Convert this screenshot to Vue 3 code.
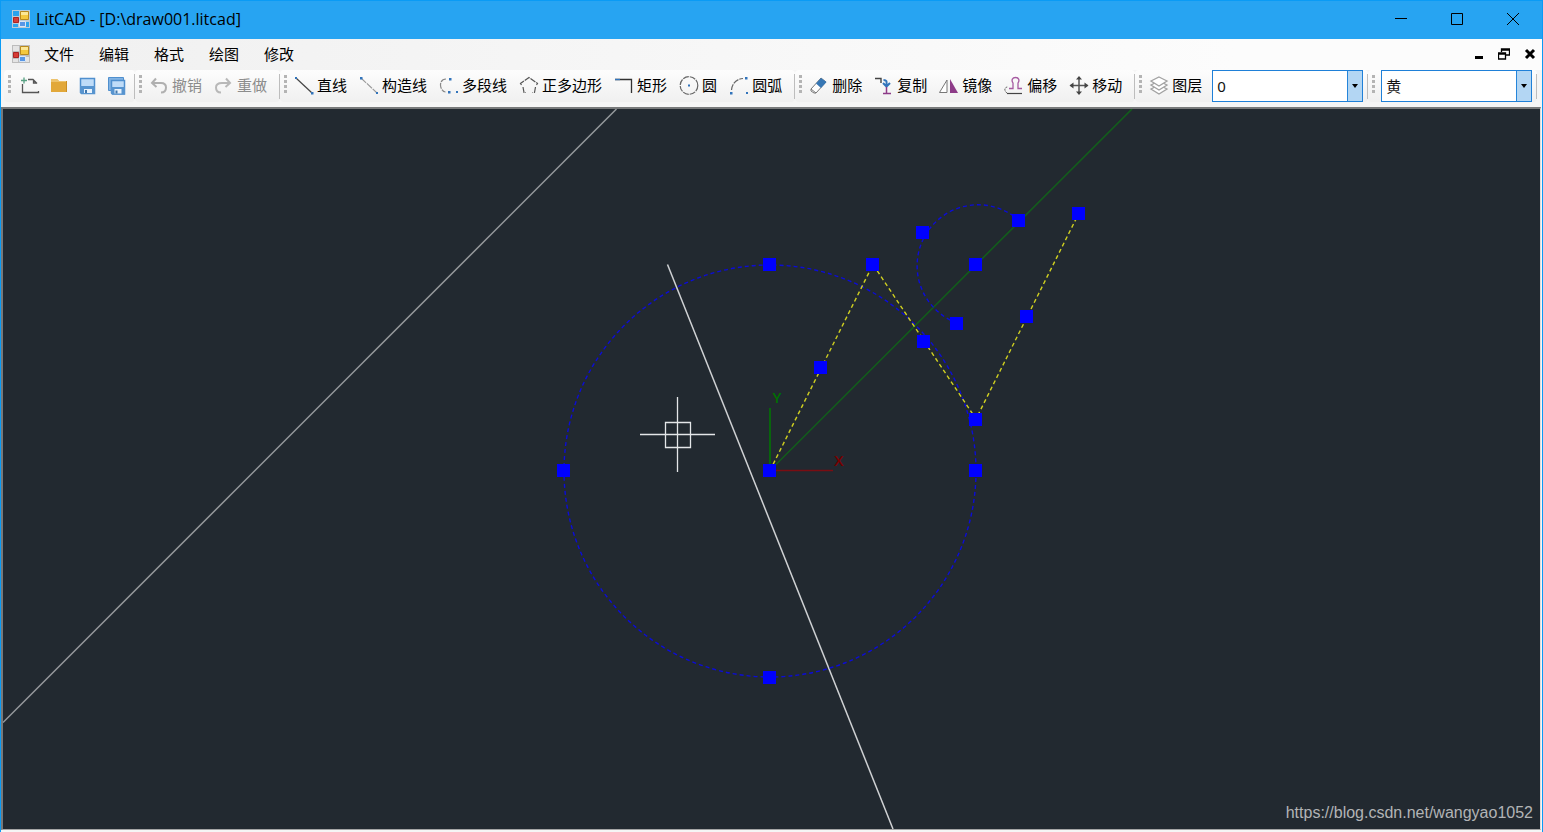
<script setup>
import { ref } from 'vue'

const menus = ['文件', '编辑', '格式', '绘图', '修改']
const fileTools = [
  { icon: 'new', label: '新建' },
  { icon: 'open', label: '打开' },
  { icon: 'save', label: '保存' },
  { icon: 'saveall', label: '另存为' }
]
const groups = [
  {
    disabled: true,
    tools: [
      { icon: 'undo', label: '撤销' },
      { icon: 'redo', label: '重做' }
    ]
  },
  {
    tools: [
      { icon: 'line', label: '直线' },
      { icon: 'xline', label: '构造线' },
      { icon: 'polyline', label: '多段线' },
      { icon: 'polygon', label: '正多边形' },
      { icon: 'rect', label: '矩形' },
      { icon: 'circle', label: '圆' },
      { icon: 'arc', label: '圆弧' }
    ]
  },
  {
    tools: [
      { icon: 'erase', label: '删除' },
      { icon: 'copy', label: '复制' },
      { icon: 'mirror', label: '镜像' },
      { icon: 'offset', label: '偏移' },
      { icon: 'move', label: '移动' }
    ]
  }
]

// Icon artwork on a 20 x 20 grid
const icons = {
  new: '<path d="M2.500 9V17.500H18.500V16" fill="none" stroke="#555" stroke-width="1.300"/><path d="M8 4.500h5l4 4M13.500 4.500v3.500h3" fill="none" stroke="#555" stroke-width="1.300"/><path d="M1 5.500h6M4 2.500v6" stroke="#58a183" stroke-width="1.300"/>',
  open: '<path d="M2 4h6l2 2h8v11H2z" fill="#e2a83a"/><path d="M2 4h6l2 2h7v1H2z" fill="#edc36d"/><path d="M17.500 6v11" stroke="#c98f25"/>',
  save: '<path d="M2.500 3.500h14v15h-13l-1-1z" fill="#bfdcf8" stroke="#4f8fce" stroke-width="1.500"/><path d="M2 11h15v8H3.500L2 17.500z" fill="#5794cf"/><path d="M6 14h8v4H6z" fill="#e9f3fd"/><path d="M7 15h2v3H7z" fill="#4178ae"/>',
  saveall: '<path d="M1.500 2.500h15v13h-15z" fill="#82b3e3" stroke="#4f8fce"/><path d="M4.500 5.500h13v13.500h-12l-1-1z" fill="#bfdcf8" stroke="#4f8fce" stroke-width="1.500"/><path d="M4 12h14v7.500H5L4 18z" fill="#5794cf"/><path d="M7.500 14h7v4.500h-7z" fill="#e9f3fd"/><path d="M8.500 15.500h2v3h-2z" fill="#4178ae"/>',
  undo: '<path d="M7 3.500L3 8l4.500 4M3.500 8H12c4 0 5 2 5 4.500 0 3-2 5-5 5" fill="none" stroke="#b0b0b0" stroke-width="2"/>',
  redo: '<path d="M12 3.500L16 8l-4.500 4M15.500 8H8c-4 0-6 2-6 4.500 0 3 2 5 5 5" fill="none" stroke="#b8b8b8" stroke-width="2"/>',
  line: '<path d="M2 3L18 18" stroke="#444" stroke-width="1.200"/><path d="M1 2h2v2H1zM17 17h2.500v2.500H17z" fill="#3274bb"/>',
  xline: '<path d="M2 3L18 18" stroke="#999" stroke-width="1.100" stroke-dasharray="7 1"/><path d="M1 2h2.500v2.500H1zM17 17h2v2H17z" fill="#3274bb"/>',
  polyline: '<path d="M7 4C3 4 1.500 7 1.500 10s2 7 5 7" fill="none" stroke="#888" stroke-width="1.200" stroke-dasharray="6 1"/><path d="M10 3h2.500v2.500H10zM9 16h2.500v2.500H9zM17 16h2v2H17z" fill="#3274bb"/>',
  polygon: '<path d="M4 12L5 17.500h2M2.500 10L1.500 8.500 10 2.500 18.500 8.500 17.500 10M16.500 12L15.500 17.500h-2" fill="none" stroke="#555" stroke-width="1.200" stroke-dasharray="6 1"/>',
  rect: '<path d="M1 4.500H17.500V18" fill="none" stroke="#333" stroke-width="1.300"/><path d="M1 4.500h5" stroke="#3274bb" stroke-width="1.300"/>',
  circle: '<circle cx="10" cy="10.500" r="8.800" fill="none" stroke="#666" stroke-width="1.200" stroke-dasharray="6 1"/><path d="M9 9.500h2v2H9z" fill="#3274bb"/>',
  arc: '<path d="M2.500 15C3 9 7 4 14 3.500" fill="none" stroke="#666" stroke-width="1.200" stroke-dasharray="6 1"/><path d="M1 17h2.500v2.500H1zM16 2h2.500v2.500H16zM17 17h2v2h-2z" fill="#3274bb"/>',
  erase: '<path d="M2 14L12 3l5 4L7 18H5l-3-2z" fill="#fff" stroke="#777"/><path d="M7 8.500L12 3l5.500 4L12 13z" fill="#3777b4"/><path d="M2 14l5 4" stroke="#777"/>',
  copy: '<path d="M1 3.500h6V8" fill="none" stroke="#444" stroke-width="1.400"/><path d="M9.500 5c4 0 3 2 3 6M9 8l3.500 3.500L16 8" fill="none" stroke="#3274bb" stroke-width="2"/><path d="M12.500 12v6M9 18.500h8" stroke="#8d3b88" stroke-width="1.500"/>',
  mirror: '<path d="M0.500 17.500L8 5v12.500z" fill="#fff" stroke="#777"/><path d="M11 4v14h8z" fill="#8d3b88"/>',
  offset: '<path d="M5 13.500h4V8C7 5 8.500 2.500 11.500 2.500S16 5 14 8v5.500h4" fill="none" stroke="#a65aa1" stroke-width="1.300"/><path d="M3 18.500h15" stroke="#444" stroke-width="1.200"/><path d="M3 18C0 16 0 12 4 12" fill="none" stroke="#555" stroke-dasharray="2 1"/>',
  move: '<path d="M10 2v17M1.500 10.500h17" stroke="#555" stroke-width="1.500"/><path d="M10 1l3 3.500H7zM10 20l3-3.500H7zM0.500 10.500l4-3v6zM19.500 10.500l-4-3v6z" fill="#444"/>',
  layers: '<g fill="#fff" stroke="#a2a2a2" stroke-width="1.300"><path d="M10 10l8 4-8 5-8-5z"/><path d="M10 6l8 4-8 5-8-5z"/><path d="M10 2l8 4-8 5-8-5z"/></g>'
}

// Drawing coordinates share the view box of the canvas
const grips = [
  [770, 264], [564, 470], [976, 470], [770, 677], [770, 470],
  [821, 367], [873, 264], [924, 341], [976, 419], [1027, 316], [1079, 213],
  [976, 264], [1019, 220], [923, 232], [957, 323]
]

const layer = ref('0')
const color = ref('黄')
</script>

<template>
  <div class="window">
    <header class="titlebar">
      <svg class="logo" viewBox="0 0 18 18" aria-hidden="true">
        <path d="M0 0h18v18H0z" fill="#b9cbd8" />
        <path d="M1 1h6v5H1zM1 14h5v3H1zM14 12h3v5h-3z" fill="#2aa3ee" />
        <path d="M8.500 1.500h8v8h-8z" fill="#f3c83e" stroke="#b98a1d" />
        <path d="M9 2h7v3H9z" fill="#fbe795" />
        <path d="M1.500 7.500h5v5h-5z" fill="#d63c35" stroke="#a92323" />
        <path d="M7.500 11.500h6v5h-6z" fill="#5897e6" stroke="#d9e7f6" />
      </svg>
      <h1>LitCAD - [D:\draw001.litcad]</h1>
      <div class="caption">
        <button aria-label="最小化"><svg viewBox="0 0 12 12"><path d="M0 5.500h12" /></svg></button>
        <button aria-label="最大化"><svg viewBox="0 0 12 12"><path d="M.5.5h11v11H.5z" /></svg></button>
        <button aria-label="关闭"><svg viewBox="0 0 12 12"><path d="M0 0l12 12M12 0L0 12" /></svg></button>
      </div>
    </header>

    <nav class="menubar">
      <svg class="logo" viewBox="0 0 18 18" aria-hidden="true">
        <path d="M0 0h18v18H0z" fill="#bcbcbc" />
        <path d="M1 1h6v5H1zM1 14h5v3H1zM14 12h3v5h-3z" fill="#e4e4e4" />
        <path d="M8.500 1.500h8v8h-8z" fill="#f3c83e" stroke="#b98a1d" />
        <path d="M9 2h7v3H9z" fill="#fbe795" />
        <path d="M1.500 7.500h5v5h-5z" fill="#d63c35" stroke="#a92323" />
        <path d="M7.500 11.500h6v5h-6z" fill="#5897e6" stroke="#d9e7f6" />
      </svg>
      <button v-for="m in menus" :key="m" class="menu">{{ m }}</button>
      <div class="child">
        <button aria-label="最小化子窗口"><svg viewBox="0 0 12 12"><path d="M3 9.500h8" stroke="#000" stroke-width="3" /></svg></button>
        <button aria-label="还原子窗口"><svg viewBox="0 0 12 12"><path d="M3.500 4V1h8v6H8M3.500 2h8M.5 5h7v6h-7zM.5 6h7" fill="none" stroke="#000" stroke-width="1.300" /></svg></button>
        <button aria-label="关闭子窗口"><svg viewBox="0 0 12 12"><path d="M2 2l8 8M10 2l-8 8" stroke="#000" stroke-width="3" /></svg></button>
      </div>
    </nav>

    <div class="toolbar">
      <div class="strip files">
        <span class="grip"></span>
        <button v-for="t in fileTools" :key="t.icon" class="tool" :aria-label="t.label">
          <svg viewBox="0 0 20 20" v-html="icons[t.icon]"></svg>
        </button>
      </div>
      <div v-for="(g, i) in groups" :key="i" class="strip">
        <span class="grip"></span>
        <button v-for="t in g.tools" :key="t.icon" class="tool" :disabled="g.disabled">
          <svg viewBox="0 0 20 20" v-html="icons[t.icon]"></svg>{{ t.label }}
        </button>
      </div>
      <div class="strip combo-strip">
        <span class="grip"></span>
        <label class="tool" for="layer">
          <svg viewBox="0 0 20 20" v-html="icons.layers"></svg>图层
        </label>
        <div class="combo">
          <select id="layer" v-model="layer"><option>0</option></select>
          <span class="drop"></span>
        </div>
      </div>
      <div class="strip combo-strip color-strip">
        <span class="grip"></span>
        <div class="combo">
          <select v-model="color" aria-label="颜色"><option>黄</option></select>
          <span class="drop"></span>
        </div>
      </div>
    </div>

    <main class="canvas">
      <svg class="drawing" viewBox="3 109 1537 720" preserveAspectRatio="xMidYMid slice">
        <g fill="none">
          <path d="M3 722.500L616.500 109" stroke="#96999c" stroke-width="1.500" />
          <path d="M667.500 264.500L893 829" stroke="#d0d2d4" stroke-width="1.500" />
          <path d="M770 470.500L1132 109" stroke="#125c1b" stroke-width="1.600" />
          <path d="M770 408V470" stroke="#007800" stroke-width="1.500" />
          <path d="M770 470.500H833" stroke="#7a0d12" stroke-width="1.500" />
          <g stroke="#0c0cd6" stroke-width="1.400" stroke-dasharray="4 3">
            <circle cx="770" cy="471" r="206" />
            <path d="M1019 220.500A61 61 0 1 0 957 323" />
          </g>
          <path d="M770 470.500L873 264.500 976 419 1079 213" stroke="#d0d020" stroke-width="1.400" stroke-dasharray="4 3" />
          <g stroke="#e4e6e8" stroke-width="1.300">
            <path d="M640 434.500H715M677.500 397V472" />
            <path d="M665.500 422.500h25v25h-25z" />
          </g>
        </g>
        <rect v-for="(p, i) in grips" :key="i" :x="p[0] - 7" :y="p[1] - 6" width="13" height="13" fill="#0000ff" />
        <text x="777" y="403" fill="#007000">Y</text>
        <text x="839" y="466" fill="#780000">X</text>
      </svg>
      <span class="watermark">https://blog.csdn.net/wangyao1052</span>
    </main>
  </div>
</template>

<style>
body {
  background: #f0f0f0;
}
</style>

<style scoped>
.window {
  box-sizing: border-box;
  display: flex;
  flex-direction: column;
  height: 100vh;
  border: 1px solid #0a9bf5;
  border-bottom: 0;
  background: #f5f5f5;
  font-family: "Noto Sans", "Noto Sans CJK SC", sans-serif;
  font-size: 15px;
  color: #000;
  overflow: hidden;
}
button {
  padding: 0;
  border: 0;
  background: none;
  font: inherit;
  color: inherit;
}
.titlebar {
  display: flex;
  align-items: center;
  box-sizing: border-box;
  flex: none;
  height: 38px;
  padding-left: 11px;
  padding-bottom: 2px;
  background: #27a4f2;
}
.logo {
  width: 18px;
  height: 18px;
}
h1 {
  margin: 0 0 0 6px;
  font-family: "Open Sans", sans-serif;
  font-size: 16px;
  line-height: 22px;
  font-weight: 400;
}
.caption {
  display: flex;
  margin-left: auto;
  padding-right: 1px;
}
.caption button {
  display: flex;
  align-items: center;
  justify-content: center;
  width: 56px;
  height: 36px;
}
.caption svg {
  width: 12px;
  height: 12px;
  fill: none;
  stroke: #000;
}
.menubar {
  display: flex;
  align-items: center;
  box-sizing: border-box;
  flex: none;
  height: 31px;
  padding-left: 11px;
  padding-bottom: 2px;
  background: linear-gradient(90deg, #f0f0f0, #fcfcfc 80%);
}
.menu {
  margin-left: 14px;
  margin-right: 11px;
  line-height: 22px;
}
.child {
  display: flex;
  gap: 14px;
  margin-left: auto;
  padding-right: 6px;
}
.child svg {
  display: block;
  width: 12px;
  height: 12px;
}
.toolbar {
  display: flex;
  flex: none;
  height: 37px;
  padding-left: 3px;
  background: #f5f5f5;
  white-space: nowrap;
}
.strip {
  position: relative;
  display: flex;
  align-items: center;
  gap: 12px;
  box-sizing: border-box;
  height: 32px;
  padding: 0 13px 0 14px;
  border-radius: 4px;
  background: linear-gradient(#fdfdfd, #f0f0f0);
}
.strip::after {
  content: "";
  position: absolute;
  right: 0;
  top: 4px;
  bottom: 3px;
  width: 1px;
  background: #bdbdbd;
}
.files {
  gap: 9px;
  padding-left: 16px;
  padding-right: 8px;
}
.combo-strip {
  gap: 10px;
  padding-right: 5px;
}
.color-strip {
  padding-left: 13px;
}
.grip {
  position: absolute;
  left: 4px;
  top: 5px;
  width: 3px;
  height: 18px;
  background: repeating-linear-gradient(#b4b4b4 0 3px, transparent 3px 5px);
}
.tool {
  display: flex;
  align-items: center;
  gap: 3px;
  padding-bottom: 2px;
  line-height: 22px;
}
.tool:disabled {
  color: #8c8c8c;
}
.tool svg {
  width: 20px;
  height: 20px;
}
.combo {
  position: relative;
  width: 151px;
  height: 32px;
}
select {
  appearance: none;
  box-sizing: border-box;
  width: 100%;
  height: 100%;
  padding: 0 20px 0 4px;
  border: 1px solid #1f80d8;
  border-radius: 0;
  background: #fff;
  font: inherit;
  color: #111;
}
.drop {
  position: absolute;
  top: 1px;
  right: 1px;
  bottom: 1px;
  width: 14px;
  border-left: 1px solid #2585da;
  background: #b3d6f3;
  pointer-events: none;
}
.drop::after {
  content: "";
  position: absolute;
  top: 13px;
  left: 4px;
  border: 3px solid transparent;
  border-top: 4px solid #000;
  border-bottom: 0;
}
.canvas {
  position: relative;
  flex: 1;
  min-height: 0;
  margin-right: 1px;
  margin-bottom: 2px;
  border: 2px solid #77797a;
  border-right: 1px solid #dcdcdc;
  border-bottom: 1px solid #a5a5a5;
  background: #222930;
}
.drawing {
  position: absolute;
  inset: 0;
  width: 100%;
  height: 100%;
}
.drawing text {
  font-family: "Open Sans", sans-serif;
  font-size: 15px;
  font-weight: 600;
  text-anchor: middle;
}
.watermark {
  position: absolute;
  right: 7px;
  bottom: 6px;
  font-family: "Liberation Sans", Arial, sans-serif;
  font-size: 16px;
  line-height: 20px;
  color: #b2b4b6;
}
</style>
